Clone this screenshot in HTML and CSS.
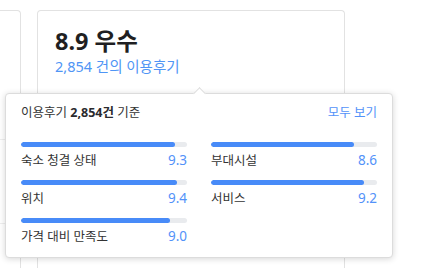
FILE: index.html
```html
<!DOCTYPE html>
<html lang="ko">
<head>
<meta charset="utf-8">
<link rel="stylesheet" href="styles.css">
</head>
<body>
<div class="page">
  <div class="cards">
    <div class="card card-left">
      <div class="divider divider-1"></div>
      <div class="divider divider-2"></div>
    </div>
    <div class="card card-main">
      <div class="score-title">8.9 우수</div>
      <div class="score-sub">2,854 건의 이용후기</div>
    </div>
  </div>

  <div class="popup">
    <div class="popup-arrow"></div>
    <div class="popup-head">
      <span class="popup-basis">이용후기 <b>2,854건</b> 기준</span>
      <span class="popup-link">모두 보기</span>
    </div>
    <div class="grid">
      <div class="item">
        <div class="bar"><div class="fill" style="width:93%"></div></div>
        <div class="row"><span class="label">숙소 청결 상태</span><span class="value">9.3</span></div>
      </div>
      <div class="item">
        <div class="bar"><div class="fill" style="width:86%"></div></div>
        <div class="row"><span class="label">부대시설</span><span class="value">8.6</span></div>
      </div>
      <div class="item">
        <div class="bar"><div class="fill" style="width:94%"></div></div>
        <div class="row"><span class="label">위치</span><span class="value">9.4</span></div>
      </div>
      <div class="item">
        <div class="bar"><div class="fill" style="width:92%"></div></div>
        <div class="row"><span class="label">서비스</span><span class="value">9.2</span></div>
      </div>
      <div class="item">
        <div class="bar"><div class="fill" style="width:90%"></div></div>
        <div class="row"><span class="label">가격 대비 만족도</span><span class="value">9.0</span></div>
      </div>
    </div>
  </div>
</div>
</body>
</html>
```

FILE: styles.css
```css
* { box-sizing: border-box; }
html, body {
  margin: 0;
  padding: 0;
  background: #ffffff;
  overflow: hidden;
}
body {
  width: 429px;
  height: 268px;
  font-family: "Noto Sans", "Noto Sans CJK KR", sans-serif;
  color: #2a2a2e;
}
.page {
  position: relative;
  width: 429px;
  height: 268px;
  padding-top: 10px;
  overflow: hidden;
}
.cards {
  display: flex;
  gap: 16px;
}
.card {
  height: 258px;
  border: 1px solid #e2e2e2;
  border-bottom: 0;
  border-radius: 4px 4px 0 0;
  background: #fff;
}
.card-left {
  width: 100px;
  margin-left: -79px;
}
.divider {
  height: 1px;
  background: #eeeeee;
}
.divider-1 { margin-top: 128px; }
.divider-2 { margin-top: 83px; }
.card-main {
  width: 308px;
  padding: 15px 17px 0;
}
.score-title {
  font-size: 23.5px;
  font-weight: 700;
  line-height: 30px;
  color: #1f1f22;
}
.score-sub {
  font-size: 14.5px;
  line-height: 20px;
  color: #4f95f5;
}

.popup {
  position: absolute;
  left: 5px;
  top: 93px;
  width: 388px;
  padding: 9px 15px 10px;
  background: #fff;
  border: 1px solid #dcdcdc;
  border-radius: 4px;
  box-shadow: 0 1px 6px rgba(0, 0, 0, 0.16);
}
.popup-arrow {
  position: absolute;
  top: -5px;
  left: 189px;
  width: 9px;
  height: 9px;
  background: #fff;
  border-top: 1px solid #dcdcdc;
  border-left: 1px solid #dcdcdc;
  transform: rotate(45deg);
}
.popup-head {
  display: flex;
  justify-content: space-between;
  font-size: 12.5px;
  line-height: 20px;
}
.popup-basis { color: #333; }
.popup-basis b { font-weight: 700; color: #2a2a2e; }
.popup-link { color: #5392f9; }

.grid {
  margin-top: 19px;
  display: grid;
  grid-template-columns: 1fr 1fr;
  column-gap: 24px;
  row-gap: 9px;
}
.bar {
  height: 5px;
  border-radius: 3px;
  background: #e9ebee;
  overflow: hidden;
}
.fill {
  height: 100%;
  border-radius: 3px;
  background: #488bf8;
}
.row {
  margin-top: 3px;
  display: flex;
  justify-content: space-between;
  align-items: baseline;
  line-height: 20px;
}
.label {
  font-size: 12.5px;
  color: #333;
}
.value {
  font-size: 13.5px;
  color: #5392f9;
}
```
